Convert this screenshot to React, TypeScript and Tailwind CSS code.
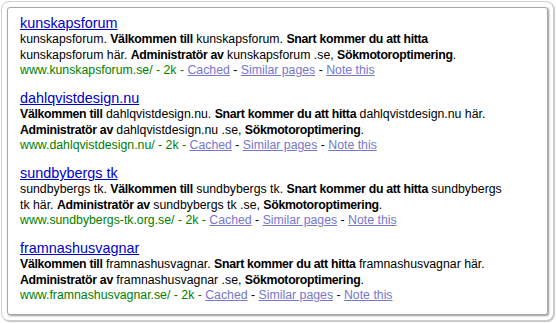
import React from 'react'

type Result = {
  title: string
  lines: React.ReactNode[]
  url: string
}

const B = ({ children }: { children: React.ReactNode }) => (
  <b className="font-bold tracking-[-0.3px]">{children}</b>
)

const results: Result[] = [
  {
    title: 'kunskapsforum',
    lines: [
      <>kunskapsforum. <B>Välkommen till</B> kunskapsforum. <B>Snart kommer du att hitta</B></>,
      <>kunskapsforum här. <B>Administratör av</B> kunskapsforum .se, <B>Sökmotoroptimering</B>.</>,
    ],
    url: 'www.kunskapsforum.se/',
  },
  {
    title: 'dahlqvistdesign.nu',
    lines: [
      <><B>Välkommen till</B> dahlqvistdesign.nu. <B>Snart kommer du att hitta</B> dahlqvistdesign.nu här.</>,
      <><B>Administratör av</B> dahlqvistdesign.nu .se, <B>Sökmotoroptimering</B>.</>,
    ],
    url: 'www.dahlqvistdesign.nu/',
  },
  {
    title: 'sundbybergs tk',
    lines: [
      <>sundbybergs tk. <B>Välkommen till</B> sundbybergs tk. <B>Snart kommer du att hitta</B> sundbybergs</>,
      <>tk här. <B>Administratör av</B> sundbybergs tk .se, <B>Sökmotoroptimering</B>.</>,
    ],
    url: 'www.sundbybergs-tk.org.se/',
  },
  {
    title: 'framnashusvagnar',
    lines: [
      <><B>Välkommen till</B> framnashusvagnar. <B>Snart kommer du att hitta</B> framnashusvagnar här.</>,
      <><B>Administratör av</B> framnashusvagnar .se, <B>Sökmotoroptimering</B>.</>,
    ],
    url: 'www.framnashusvagnar.se/',
  },
]

const ResultItem = ({ title, lines, url }: Result) => {
  return (
    <div className="mb-[11.5px]">
      <a href="#" className="block text-[14.4px] leading-[17px] text-[#0000cc] underline whitespace-nowrap">
        {title}
      </a>
      <div className="text-[12.3px] leading-[15.5px] text-black">
        {lines.map((line, i) => (
          <div key={i} className="whitespace-nowrap">
            {line}
          </div>
        ))}
        <div className="whitespace-nowrap">
          <span className="text-[#008000]">{url} - 2k - </span>
          <a href="#" className="text-[#7777cc] underline">Cached</a>
          {' - '}
          <a href="#" className="text-[#7777cc] underline">Similar pages</a>
          {' - '}
          <a href="#" className="text-[#7777cc] underline">Note this</a>
        </div>
      </div>
    </div>
  )
}

export default function App() {
  return (
    <div className="w-[556px] h-[323px] bg-white pt-[1px] pl-[1px] font-['Liberation_Sans',Arial,sans-serif]">
      <div className="w-[553px] h-[320px] rounded-[8px] border border-[#cfcfcf] shadow-[1px_1px_1px_#c4c4c4] p-[5px] bg-white">
        <div className="h-full rounded-[3px] border border-[#a8a8a8] shadow-[1px_1px_2px_#9a9a9a] pl-[12px] pt-[7px] bg-white">
          {results.map((r) => (
            <ResultItem key={r.title} {...r} />
          ))}
        </div>
      </div>
    </div>
  )
}
